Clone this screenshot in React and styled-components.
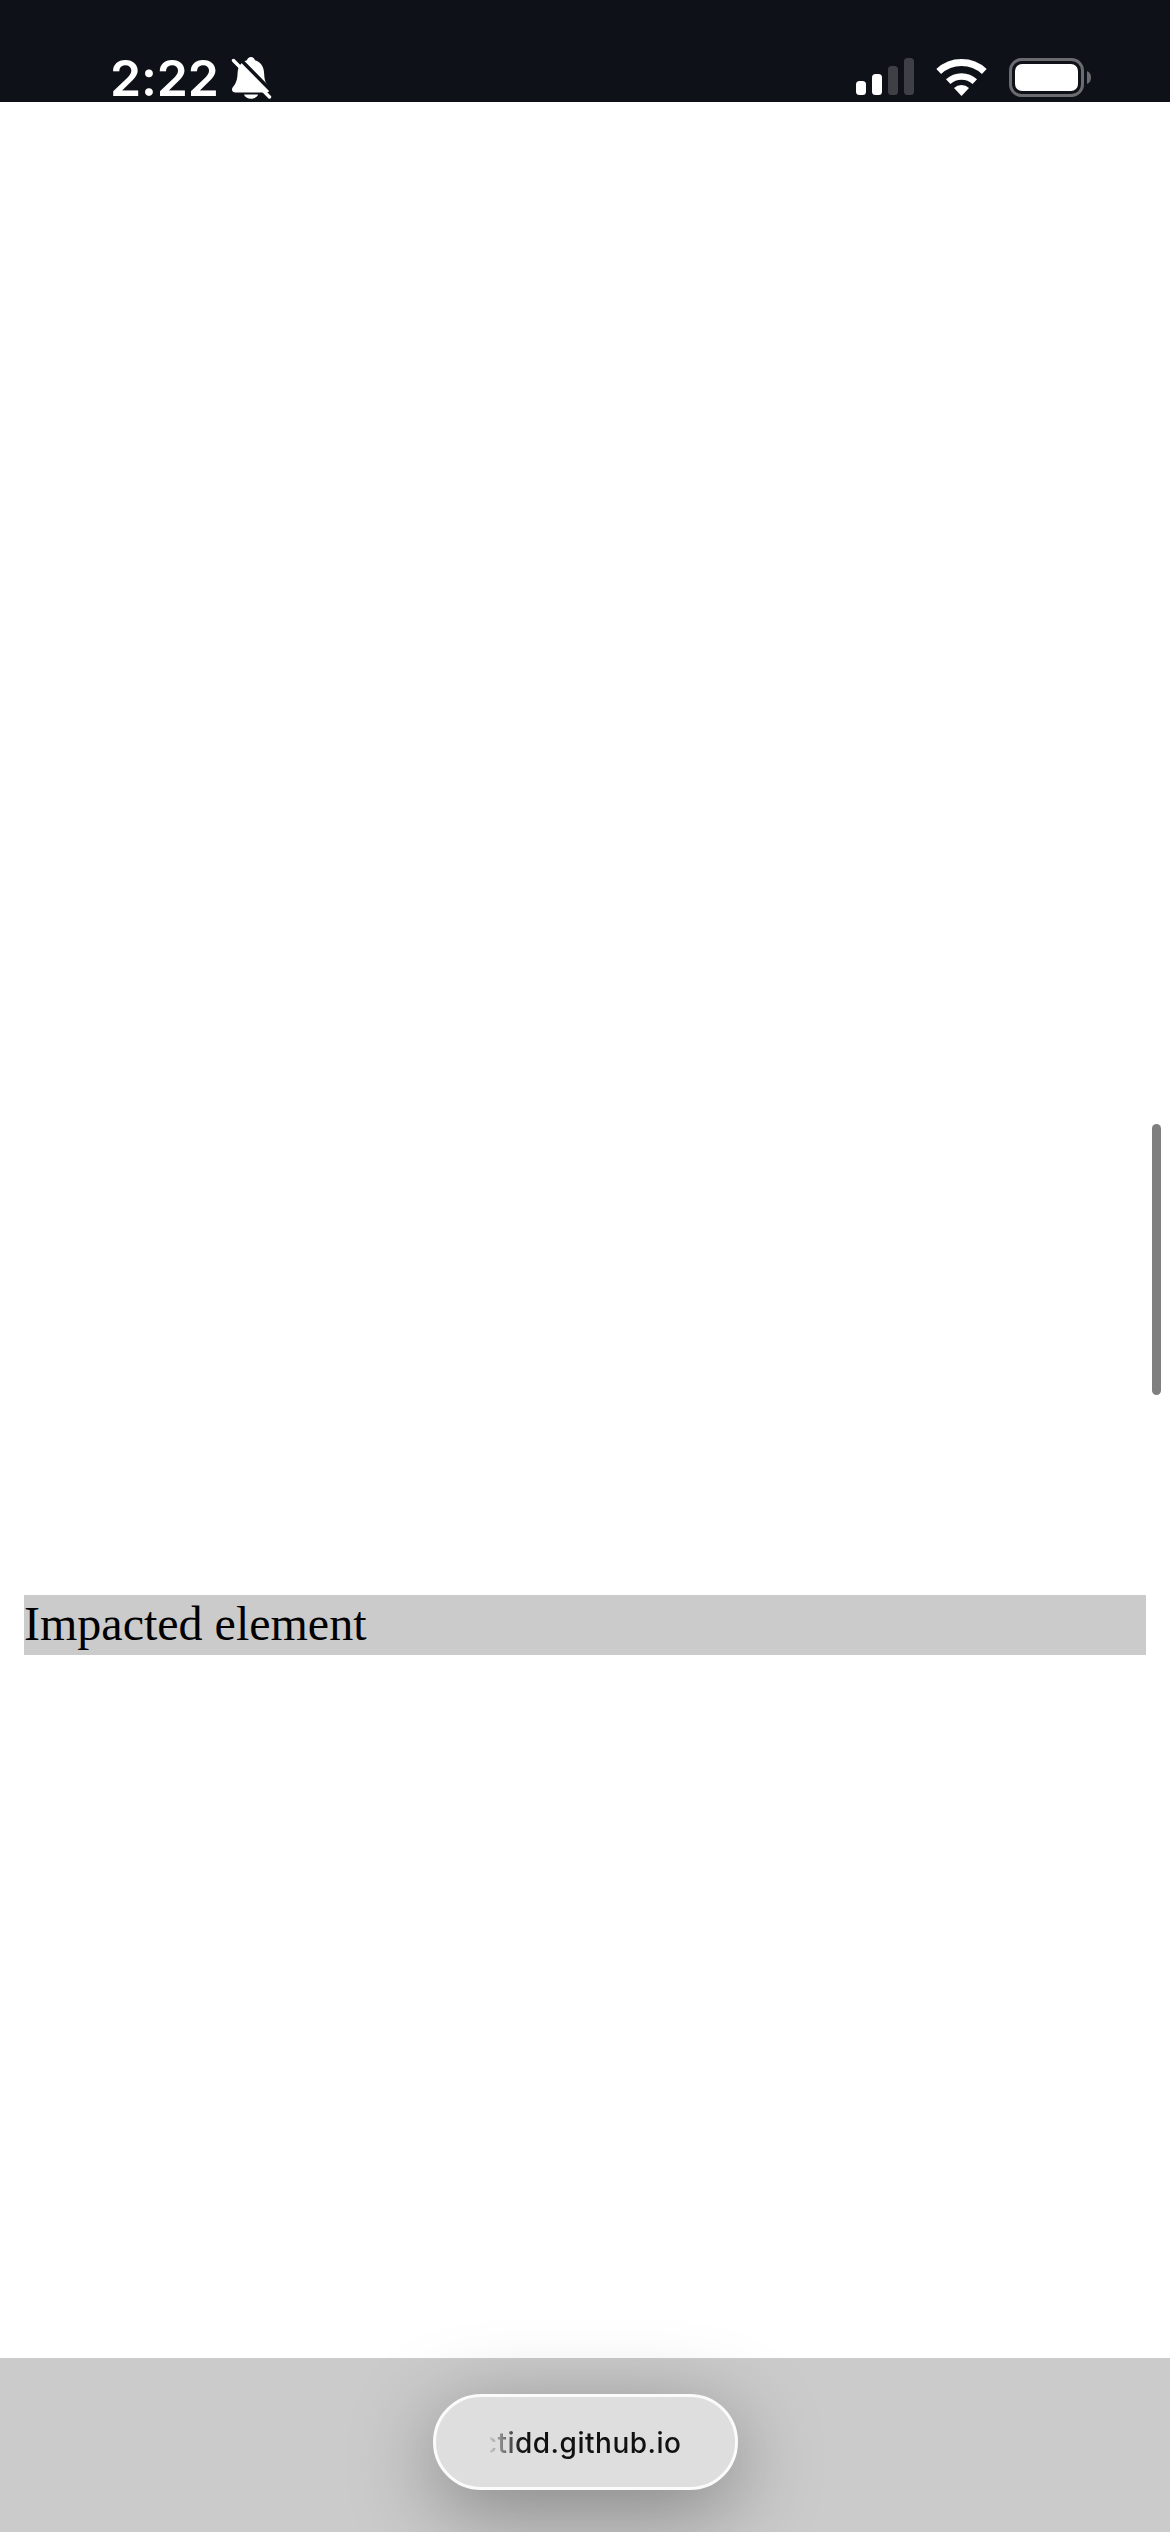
import React from "react";
import styled, { createGlobalStyle } from "styled-components";

const Global = createGlobalStyle`
  html, body { margin: 0; padding: 0; background: #fff; }
  #root { width: 1170px; }
`;

const Page = styled.div`
  position: relative;
  width: 1170px;
  height: 2532px;
  overflow: hidden;
  display: flex;
  flex-direction: column;
  background: #fff;
`;

const StatusBar = styled.header`
  height: 102px;
  flex: none;
  box-sizing: border-box;
  background: #0e1118;
  display: flex;
  justify-content: space-between;
  align-items: flex-start;
  padding: 57px 78px 0 110px;
  color: #fff;
`;

const StatusLeft = styled.div`
  display: flex;
  align-items: center;
  gap: 11px;
`;

const Time = styled.span`
  font: 600 50px/41px Inter, "Liberation Sans", sans-serif;
  letter-spacing: -0.2px;
`;

const StatusRight = styled.div`
  display: flex;
  align-items: flex-start;
`;

const Signal = styled.svg`
  width: 58px;
  height: 40px;
  margin-top: 1px;
`;

const Wifi = styled.svg`
  width: 51px;
  height: 38px;
  margin: 2px 0 0 22px;
`;

const Battery = styled.svg`
  width: 83px;
  height: 41px;
  margin: 1px 0 0 22px;
`;

const Bell = styled.svg`
  width: 42px;
  height: 42px;
`;

const Main = styled.main`
  flex: 1;
  padding: 1493px 24px 0;
`;

const Impacted = styled.div`
  height: 60px;
  background: #cbcbcb;
  color: #000;
  font: 400 48px/58px "Liberation Serif", "Times New Roman", serif;
`;

const BottomBar = styled.footer`
  height: 174px;
  flex: none;
  background: #cbcbcb;
`;

const Pill = styled.div`
  position: absolute;
  left: 433px;
  top: 2394px;
  width: 305px;
  height: 96px;
  box-sizing: border-box;
  border-radius: 48px;
  border: 3px solid #fbfbfb;
  background: #dedede;
  box-shadow: 0 20px 86px rgba(0, 0, 0, 0.36);
  display: flex;
  align-items: center;
  justify-content: center;
`;

const UrlClip = styled.div`
  width: 192px;
  overflow: hidden;
  display: flex;
  justify-content: flex-end;
  white-space: nowrap;
  color: #111;
  font: 500 28px/40px Inter, "Liberation Sans", sans-serif;
  letter-spacing: 0.5px;
  margin-top: 2px;
  -webkit-mask-image: linear-gradient(90deg, rgba(0,0,0,0.1) 0, #000 32px);
  mask-image: linear-gradient(90deg, rgba(0,0,0,0.1) 0, #000 32px);
`;

const ScrollThumb = styled.div`
  position: absolute;
  left: 1152px;
  top: 1124px;
  width: 9px;
  height: 271px;
  border-radius: 4.5px;
  background: #7f7f7f;
`;

export default function App() {
  return (
    <Page>
      <Global />
      <StatusBar>
        <StatusLeft>
          <Time>2:22</Time>
          <Bell viewBox="0 0 42 42">
            <path fill="#fff" d="M21 0c2 0 3.500 1.300 4 3.200 5.500 1.700 8.800 6.300 9.100 12.800.2 4.800.6 7.800 2.500 10.900 1.300 2 3 3.500 3 5.600 0 1.800-1.400 3.100-3.500 3.100H5.500C3.400 35.600 2 34.300 2 32.500c0-2.100 1.900-3.600 3.100-5.600 1.800-3.100 2.300-6.100 2.500-10.900.3-6.500 3.700-11.100 9.300-12.800C17.400 1.300 19 0 21 0z" />
            <path fill="#fff" d="M14 37.500h14c-.7 2.500-3.600 4.200-7 4.200s-6.300-1.700-7-4.200z" />
            <path stroke="#0e1118" strokeWidth="3.500" d="M6 -2L46 38.500" />
            <path stroke="#fff" strokeWidth="3.400" strokeLinecap="round" d="M3.500 3.500L39.500 40" />
          </Bell>
        </StatusLeft>
        <StatusRight>
          <Signal viewBox="0 0 58 40">
            <rect x="0" y="23" width="10" height="14" rx="3.500" fill="#fff" />
            <rect x="16" y="16" width="10" height="21" rx="3.500" fill="#fff" />
            <rect x="32" y="8" width="10" height="29" rx="3.500" fill="#3f4045" />
            <rect x="48" y="0" width="10" height="37" rx="3.500" fill="#3f4045" />
          </Signal>
          <Wifi viewBox="0 0 51 38" fill="none">
            <path stroke="#fff" strokeWidth="7" d="M2.700 12.500A33.500 33.500 0 0 1 48.300 12.500" />
            <path stroke="#fff" strokeWidth="6.500" d="M12.200 22.700A19.500 19.500 0 0 1 38.800 22.700" />
            <path fill="#fff" d="M25.500 37L18 29A11 11 0 0 1 33 29Z" />
          </Wifi>
          <Battery viewBox="0 0 83 41" fill="none">
            <rect x="1.500" y="1.500" width="72" height="36" rx="11" stroke="#6b6c70" strokeWidth="3" />
            <rect x="6" y="6" width="63" height="27" rx="7" fill="#fff" />
            <path fill="#6b6c70" d="M78 13c2.500.8 4 3.300 4 6.500s-1.500 5.700-4 6.500z" />
          </Battery>
        </StatusRight>
      </StatusBar>
      <Main>
        <Impacted>Impacted element</Impacted>
      </Main>
      <BottomBar />
      <ScrollThumb />
      <Pill>
        <UrlClip>ctidd.github.io</UrlClip>
      </Pill>
    </Page>
  );
}
